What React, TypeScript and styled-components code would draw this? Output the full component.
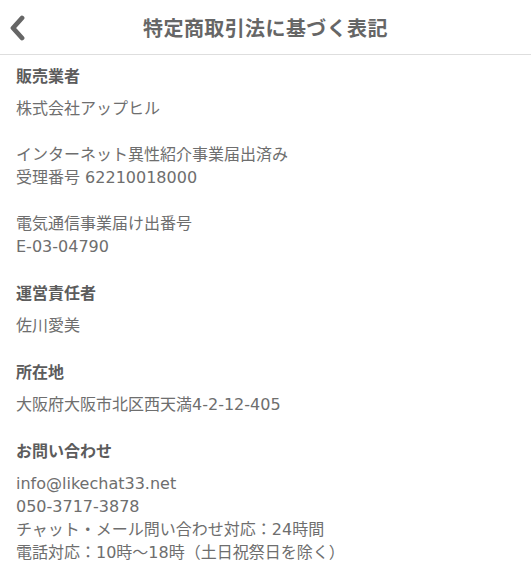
import styled, { createGlobalStyle } from "styled-components";

const GlobalStyle = createGlobalStyle`
  html, body {
    margin: 0;
    padding: 0;
    background: #ffffff;
  }
  body {
    font-family: "DejaVu Sans", "Noto Sans CJK JP", sans-serif;
    -webkit-font-smoothing: antialiased;
  }
`;

const Page = {
  Wrapper: styled.div`
    width: 531px;
    min-height: 576px;
    background: #fff;
  `,
  Header: styled.header`
    position: relative;
    display: flex;
    align-items: center;
    justify-content: center;
    height: 54px;
    border-bottom: 1px solid #dedede;
  `,
  Back: styled.button`
    position: absolute;
    left: 3px;
    top: 11px;
    width: 30px;
    height: 34px;
    padding: 0;
    border: none;
    background: none;
    display: flex;
    align-items: center;
    justify-content: center;
    cursor: pointer;
  `,
  Title: styled.h1`
    margin: 0;
    font-family: "Noto Sans CJK JP", sans-serif;
    font-size: 20px;
    font-weight: 700;
    color: #666;
    letter-spacing: 0.4px;
    padding-top: 1px;
  `,
  Content: styled.main`
    display: flex;
    flex-direction: column;
    gap: 23px;
    padding: 9px 16px 20px;
  `,
  Section: styled.section`
    display: flex;
    flex-direction: column;
    gap: 10px;
  `,
  Label: styled.h2`
    margin: 0;
    font-family: "Noto Sans CJK JP", sans-serif;
    font-size: 16px;
    font-weight: 700;
    line-height: 23px;
    color: #5c5c5c;
  `,
  Text: styled.p`
    margin: 0;
    font-size: 16px;
    line-height: 23px;
    color: #6e6e6e;
  `,
};

const BackIcon = () => (
  <svg width="20" height="26" viewBox="0 0 20 26" fill="none">
    <polyline
      points="14,3 5,13 14,23"
      stroke="#666"
      strokeWidth="4.8"
      strokeLinecap="round"
      strokeLinejoin="round"
    />
  </svg>
);

type Item = { label?: string; lines: string[] };

const items: Item[] = [
  { label: "販売業者", lines: ["株式会社アップヒル"] },
  { lines: ["インターネット異性紹介事業届出済み", "受理番号 62210018000"] },
  { lines: ["電気通信事業届け出番号", "E-03-04790"] },
  { label: "運営責任者", lines: ["佐川愛美"] },
  { label: "所在地", lines: ["大阪府大阪市北区西天満4-2-12-405"] },
  {
    label: "お問い合わせ",
    lines: [
      "info@likechat33.net",
      "050-3717-3878",
      "チャット・メール問い合わせ対応：24時間",
      "電話対応：10時〜18時（土日祝祭日を除く）",
    ],
  },
];

export default function App() {
  return (
    <>
      <GlobalStyle />
      <Page.Wrapper>
        <Page.Header>
          <Page.Back aria-label="戻る">
            <BackIcon />
          </Page.Back>
          <Page.Title>特定商取引法に基づく表記</Page.Title>
        </Page.Header>
        <Page.Content>
          {items.map((item, i) => (
            <Page.Section key={i}>
              {item.label && <Page.Label>{item.label}</Page.Label>}
              <Page.Text>
                {item.lines.map((line, j) => (
                  <span key={j}>
                    {j > 0 && <br />}
                    {line}
                  </span>
                ))}
              </Page.Text>
            </Page.Section>
          ))}
        </Page.Content>
      </Page.Wrapper>
    </>
  );
}
